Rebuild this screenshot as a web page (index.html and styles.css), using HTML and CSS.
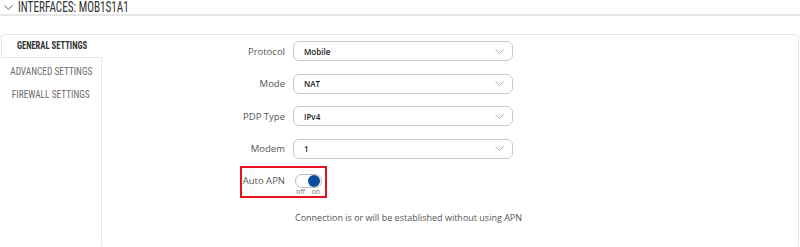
FILE: index.html
```html
<!DOCTYPE html>
<html lang="en">
<head>
    <meta charset="UTF-8">
    <title>Interfaces: MOB1S1A1</title>
    <link rel="stylesheet" href="styles.css">
</head>
<body>
    <div class="section-title">
        <svg class="title-chevron" width="9" height="5" viewBox="0 0 9 5">
            <path d="M0.5 0.5 L4.5 4.3 L8.5 0.5" fill="none" stroke="#666" stroke-width="1"/>
        </svg>
        <span class="title-text">INTERFACES: MOB1S1A1</span>
    </div>

    <div class="settings">
        <div class="tabs">
            <div class="tab active"><span>GENERAL SETTINGS</span></div>
            <div class="tab"><span>ADVANCED SETTINGS</span></div>
            <div class="tab"><span>FIREWALL SETTINGS</span></div>
        </div>

        <div class="panel">
            <div class="row">
                <label>Protocol</label>
                <div class="select">
                    <span>Mobile</span>
                    <svg width="9" height="5" viewBox="0 0 9 5"><path d="M0.5 0.5 L4.5 4.5 L8.5 0.5" fill="none" stroke="#aaa" stroke-width="1"/></svg>
                </div>
            </div>
            <div class="row">
                <label>Mode</label>
                <div class="select">
                    <span>NAT</span>
                    <svg width="9" height="5" viewBox="0 0 9 5"><path d="M0.5 0.5 L4.5 4.5 L8.5 0.5" fill="none" stroke="#aaa" stroke-width="1"/></svg>
                </div>
            </div>
            <div class="row">
                <label>PDP Type</label>
                <div class="select">
                    <span>IPv4</span>
                    <svg width="9" height="5" viewBox="0 0 9 5"><path d="M0.5 0.5 L4.5 4.5 L8.5 0.5" fill="none" stroke="#aaa" stroke-width="1"/></svg>
                </div>
            </div>
            <div class="row">
                <label>Modem</label>
                <div class="select">
                    <span>1</span>
                    <svg width="9" height="5" viewBox="0 0 9 5"><path d="M0.5 0.5 L4.5 4.5 L8.5 0.5" fill="none" stroke="#aaa" stroke-width="1"/></svg>
                </div>
            </div>
            <div class="row switch-row">
                <label>Auto APN</label>
                <div class="switch">
                    <div class="track"><div class="knob"></div></div>
                    <div class="switch-labels"><span>off</span><span>on</span></div>
                </div>
                <div class="highlight"></div>
            </div>
            <div class="row hint-row">
                <div></div>
                <div class="hint">Connection is or will be established without using APN</div>
            </div>
        </div>
    </div>
</body>
</html>
```

FILE: styles.css
```css
body {
    margin: 0;
    padding: 0;
    background-color: #fff;
    font-family: 'Open Sans', 'Noto Sans', sans-serif;
    color: #555;
    width: 800px;
    height: 247px;
    overflow: hidden;
}

.section-title {
    display: flex;
    align-items: center;
    gap: 5px;
    height: 14px;
    padding-left: 4px;
    border-bottom: 2px solid #e6e6e6;
    font-family: 'Roboto Condensed', 'Liberation Sans Narrow', 'DejaVu Sans Condensed', sans-serif;
    font-size: 14px;
    color: #333;
    line-height: 14px;
}

.title-chevron {
    margin-top: 1px;
}

.title-text {
    display: inline-block;
    transform: scaleX(0.8);
    transform-origin: left center;
    white-space: nowrap;
}

.settings {
    display: flex;
    margin-top: 18px;
    padding-left: 1px;
}

.tabs {
    width: 100px;
    display: flex;
    flex-direction: column;
}

.tab {
    font-family: 'Roboto Condensed', 'Liberation Sans Narrow', 'DejaVu Sans Condensed', sans-serif;
    font-size: 11px;
    color: #6a6a6a;
    text-align: center;
    height: 23px;
    line-height: 23px;
    white-space: nowrap;
}

.tab span {
    display: inline-block;
    transform: scaleX(0.85);
}

.tab.active {
    color: #333;
    font-weight: bold;
    height: 22px;
    line-height: 22px;
    border: 1px solid #e6e6e6;
    border-right: none;
    border-top-left-radius: 4px;
    background-color: #fff;
    margin-right: -1px;
    margin-bottom: 2px;
    position: relative;
    z-index: 1;
}

.tab.active span {
    transform: scaleX(0.78);
}

.panel {
    flex: 1;
    margin-right: 1px;
    height: 209px;
    border: 1px solid #e6e6e6;
    border-radius: 0 4px 5px 5px;
    padding-top: 6px;
}

.row {
    display: grid;
    grid-template-columns: 183px 220px;
    column-gap: 8px;
    align-items: center;
    height: 20px;
    margin-bottom: 12.5px;
    position: relative;
}

.row label {
    text-align: right;
    font-size: 9.5px;
    color: #555;
}

.select {
    box-sizing: border-box;
    height: 20px;
    border: 1px solid #c8c8c8;
    border-radius: 6px;
    display: flex;
    align-items: center;
    justify-content: space-between;
    padding: 0 8px 0 10px;
    font-size: 8px;
    font-weight: 600;
    color: #222;
}

.switch-row {
    height: 30px;
    align-items: start;
    margin-bottom: 6.5px;
}

.switch-row label {
    padding-top: 3px;
    line-height: 13px;
}

.switch {
    display: flex;
    flex-direction: column;
    width: 28px;
    margin-left: 2px;
    margin-top: 2.5px;
}

.track {
    box-sizing: border-box;
    width: 27px;
    height: 14px;
    border: 1px solid #bbb;
    border-radius: 7px;
    display: flex;
    justify-content: flex-end;
    align-items: center;
    padding-right: 1px;
}

.knob {
    width: 12px;
    height: 12px;
    border-radius: 50%;
    background-color: #0a4ea0;
}

.switch-labels {
    display: flex;
    justify-content: space-between;
    font-size: 7px;
    line-height: 8px;
    color: #777;
    margin-top: 0;
    padding: 0 3px 0 1px;
}

.highlight {
    position: absolute;
    left: 138px;
    top: -5.5px;
    width: 83px;
    height: 28px;
    border: 2px solid #e5131d;
    pointer-events: none;
}

.hint {
    font-size: 9px;
    color: #555;
    margin-left: 2px;
    white-space: nowrap;
}
```
